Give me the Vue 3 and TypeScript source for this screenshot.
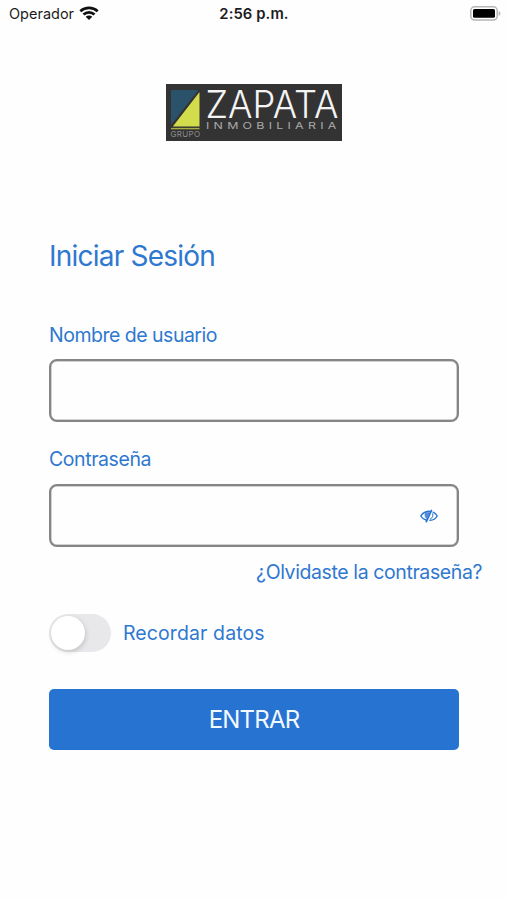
<script setup lang="ts">
import { ref } from 'vue'

const username = ref('')
const password = ref('')
const remember = ref(false)
const showPassword = ref(false)
</script>

<template>
  <main class="screen">
    <header class="status">
      <div class="carrier">
        <span class="carrier-name">Operador</span>
        <svg class="wifi" width="20" height="14" viewBox="0 0 20 14" fill="none" stroke="#111" stroke-width="2.7">
          <path d="M1.300 5.200C6.200.700 13.800.700 18.700 5.200" />
          <path d="M4.500 8.600c3.100-2.900 7.900-2.900 11 0" />
          <path d="M10 13.900 6.700 10.700c1.800-1.600 4.800-1.600 6.600 0Z" fill="#111" stroke="none" />
        </svg>
      </div>
      <span class="clock">2:56 p.m.</span>
      <svg class="battery" width="31" height="15" viewBox="0 0 31 15">
        <rect x=".8" y=".8" width="26.4" height="13.2" rx="3.8" fill="#fff" stroke="#b5b5b5" stroke-width="1.5" />
        <rect x="3" y="3" width="22" height="8.8" rx="1.6" fill="#000" />
        <path d="M28.600 5v4.800c1.100-.4 1.800-1.300 1.800-2.400s-.7-2-1.800-2.400Z" fill="#b5b5b5" />
      </svg>
    </header>

    <svg class="logo" width="176" height="57" viewBox="0 0 176 57">
      <rect width="176" height="57" fill="#333" />
      <path d="M5 6h27.500L5 41Z" fill="#2b526b" />
      <path d="M33.500 8v34.500H6.800Z" fill="#d3dc4a" />
      <path d="M5 44.600h28.500" stroke="#a6ad43" stroke-width="1.400" />
      <text class="brand" x="39.500" y="33.800" textLength="133" lengthAdjust="spacingAndGlyphs">ZAPATA</text>
      <text class="sub" x="40" y="45" textLength="134.500" lengthAdjust="spacingAndGlyphs">INMOBILIARIA</text>
      <text class="group" x="4.500" y="53" textLength="29.500">GRUPO</text>
    </svg>

    <form class="form" @submit.prevent>
      <h1 class="title">Iniciar Sesión</h1>

      <label class="label" for="user">Nombre de usuario</label>
      <div class="field">
        <input id="user" v-model="username" type="text" />
      </div>

      <label class="label second" for="pass">Contraseña</label>
      <div class="field">
        <input id="pass" v-model="password" :type="showPassword ? 'text' : 'password'" />
        <button class="eye" type="button" @click="showPassword = !showPassword">
          <svg width="18" height="14" viewBox="0 0 18 14" fill="none" stroke="#2673d2" stroke-width="1.400" stroke-linecap="round">
            <path d="M6.500 11.200C4.200 10.700 2.100 9.200.800 7 2.600 3.900 5.500 2.300 10.200 2.300" />
            <path d="M13.200 3.200C14.900 4 16.300 5.300 17.200 7c-1.500 2.600-4 4.200-7.200 4.300" />
            <path d="M11.500 1.500 6.300 12.700" stroke-width="1.700" />
            <path d="M5 3.200h5L6.900 9.900C4.600 8.700 4 5.800 5 3.200Z" fill="#2673d2" fill-opacity=".8" stroke="none" />
            <path d="M12.700 4.800c.7 2-.2 4.300-2.200 5" stroke-width="1" />
          </svg>
        </button>
      </div>

      <a class="forgot">¿Olvidaste la contraseña?</a>

      <div class="remember">
        <button class="toggle" :class="{ on: remember }" type="button" @click="remember = !remember">
          <span class="knob"></span>
        </button>
        <span class="remember-text">Recordar datos</span>
      </div>

      <button class="submit" type="submit">ENTRAR</button>
    </form>
  </main>
</template>

<style>
body {
  background: #fefefe;
}
</style>

<style scoped>
.screen {
  box-sizing: border-box;
  height: 900px;
  display: flex;
  flex-direction: column;
  font-family: Inter, "Liberation Sans", sans-serif;
  color: #2f78d0;
  background: #fefefe;
}

.status {
  display: grid;
  grid-template-columns: 1fr auto 1fr;
  align-items: center;
  height: 28px;
  padding: 0 6px 0 9px;
  color: #1c1c1c;
}

.carrier {
  display: flex;
  align-items: center;
  gap: 5px;
}

.carrier-name {
  font-size: 14.5px;
  line-height: 18px;
}

.wifi {
  margin-top: -2px;
}

.clock {
  padding-right: 2px;
  font-size: 14.8px;
  line-height: 18px;
  font-weight: 600;
  letter-spacing: 0.1px;
}

.battery {
  justify-self: end;
  margin-top: -1px;
}

.logo {
  align-self: center;
  flex: none;
  margin-top: 56px;
  overflow: visible;
}

.brand {
  font-family: Inter, sans-serif;
  font-size: 38px;
  font-weight: 300;
  fill: #f4f4f4;
}

.sub {
  font-family: Inter, sans-serif;
  font-size: 8.8px;
  font-weight: 400;
  letter-spacing: 3px;
  fill: #aaa;
}

.group {
  font-family: Inter, sans-serif;
  font-size: 8px;
  fill: #8c8c8c;
}

.form {
  display: flex;
  flex-direction: column;
  padding: 0 48px 0 49px;
}

.title {
  margin: 97px 0 0;
  font-size: 28px;
  line-height: 36px;
  font-weight: 400;
  letter-spacing: -0.78px;
}

.label {
  margin-top: 49px;
  font-size: 19.5px;
  line-height: 24px;
  letter-spacing: -0.5px;
}

.label.second {
  margin-top: 25px;
  letter-spacing: -0.42px;
}

.field {
  box-sizing: border-box;
  display: flex;
  align-items: center;
  height: 63px;
  margin-top: 12px;
  padding: 0 19px;
  border: 2px solid #858585;
  border-radius: 8px;
  box-shadow: inset 0 0 0 0.5px #a5a5a5;
}

.label.second + .field {
  margin-top: 13px;
}

.field input {
  flex: 1;
  min-width: 0;
  border: 0;
  outline: 0;
  background: transparent;
  font: inherit;
  font-size: 19px;
}

.eye {
  display: flex;
  padding: 0;
  border: 0;
  background: none;
}

.forgot {
  align-self: flex-end;
  margin: 13px -23px 0 0;
  font-size: 19.5px;
  line-height: 24px;
  letter-spacing: -0.4px;
}

.remember {
  display: flex;
  align-items: center;
  gap: 12px;
  margin-top: 30px;
}

.toggle {
  box-sizing: border-box;
  width: 62px;
  height: 38px;
  padding: 2px;
  border: 0;
  border-radius: 19px;
  background: #e8e8ea;
}

.toggle.on {
  background: #2673d2;
}

.knob {
  display: block;
  width: 34px;
  height: 34px;
  border-radius: 50%;
  background: #fff;
  box-shadow: 1px 2px 5px rgba(0, 0, 0, 0.16);
}

.toggle.on .knob {
  margin-left: 24px;
}

.remember-text {
  font-size: 19.5px;
  letter-spacing: 0.1px;
}

.submit {
  height: 61px;
  margin-top: 37px;
  padding: 0;
  border: 0;
  border-radius: 5px;
  background: #2673d1;
  color: #f2f8ff;
  font-family: inherit;
  font-size: 24px;
  letter-spacing: -0.8px;
}
</style>
